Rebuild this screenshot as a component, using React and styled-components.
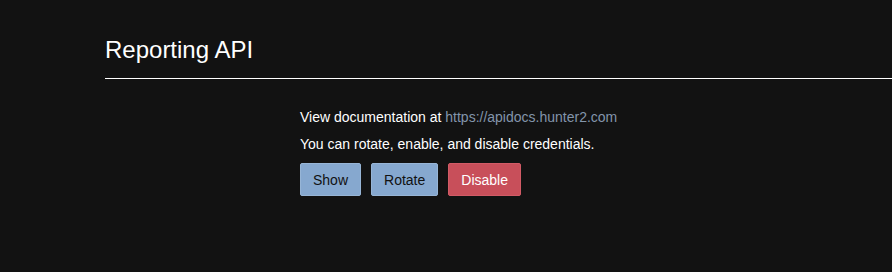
import React from "react";
import styled, { createGlobalStyle } from "styled-components";

const GlobalStyle = createGlobalStyle`
  html, body {
    margin: 0;
    padding: 0;
    background: #121212;
  }
  body {
    font-family: "Liberation Sans", Arial, sans-serif;
    color: #ffffff;
  }
`;

function App() {
  return (
    <React.Fragment>
      <GlobalStyle />
      <Page>
        <Header>
          <Title>Reporting API</Title>
        </Header>
        <Body>
          <Line>
            View documentation at{" "}
            <DocLink href="#">https://apidocs.hunter2.com</DocLink>
          </Line>
          <Line>You can rotate, enable, and disable credentials.</Line>
          <Actions>
            <Btn>Show</Btn>
            <Btn>Rotate</Btn>
            <Btn danger>Disable</Btn>
          </Actions>
        </Body>
      </Page>
    </React.Fragment>
  );
}

export default App;

const Page = styled.div`
  width: 892px;
  height: 272px;
  padding-left: 105px;
  box-sizing: border-box;
`;

const Header = styled.header`
  border-bottom: 1px solid #ffffff;
  padding-top: 35px;
  padding-bottom: 14px;
`;

const Title = styled.h1`
  margin: 0;
  font-size: 24px;
  font-weight: normal;
  line-height: 29px;
`;

const Body = styled.div`
  padding-left: 195px;
  padding-top: 30px;
`;

const Line = styled.p`
  margin: 0 0 11px;
  font-size: 14px;
  line-height: 16px;
`;

const DocLink = styled.a`
  color: #8395ab;
  text-decoration: none;
`;

const Actions = styled.div`
  display: flex;
  gap: 10px;
  margin-top: 6px;
`;

const Btn = styled.button`
  height: 33px;
  padding: 0 12px;
  border-radius: 2px;
  font-family: "Liberation Sans", Arial, sans-serif;
  font-size: 14px;
  border: 1px solid ${(p) => (p.danger ? "#d25b66" : "#97b5d6")};
  background: ${(p) => (p.danger ? "#c84f5a" : "#86a8cf")};
  color: ${(p) => (p.danger ? "#ffffff" : "#111111")};
`;
